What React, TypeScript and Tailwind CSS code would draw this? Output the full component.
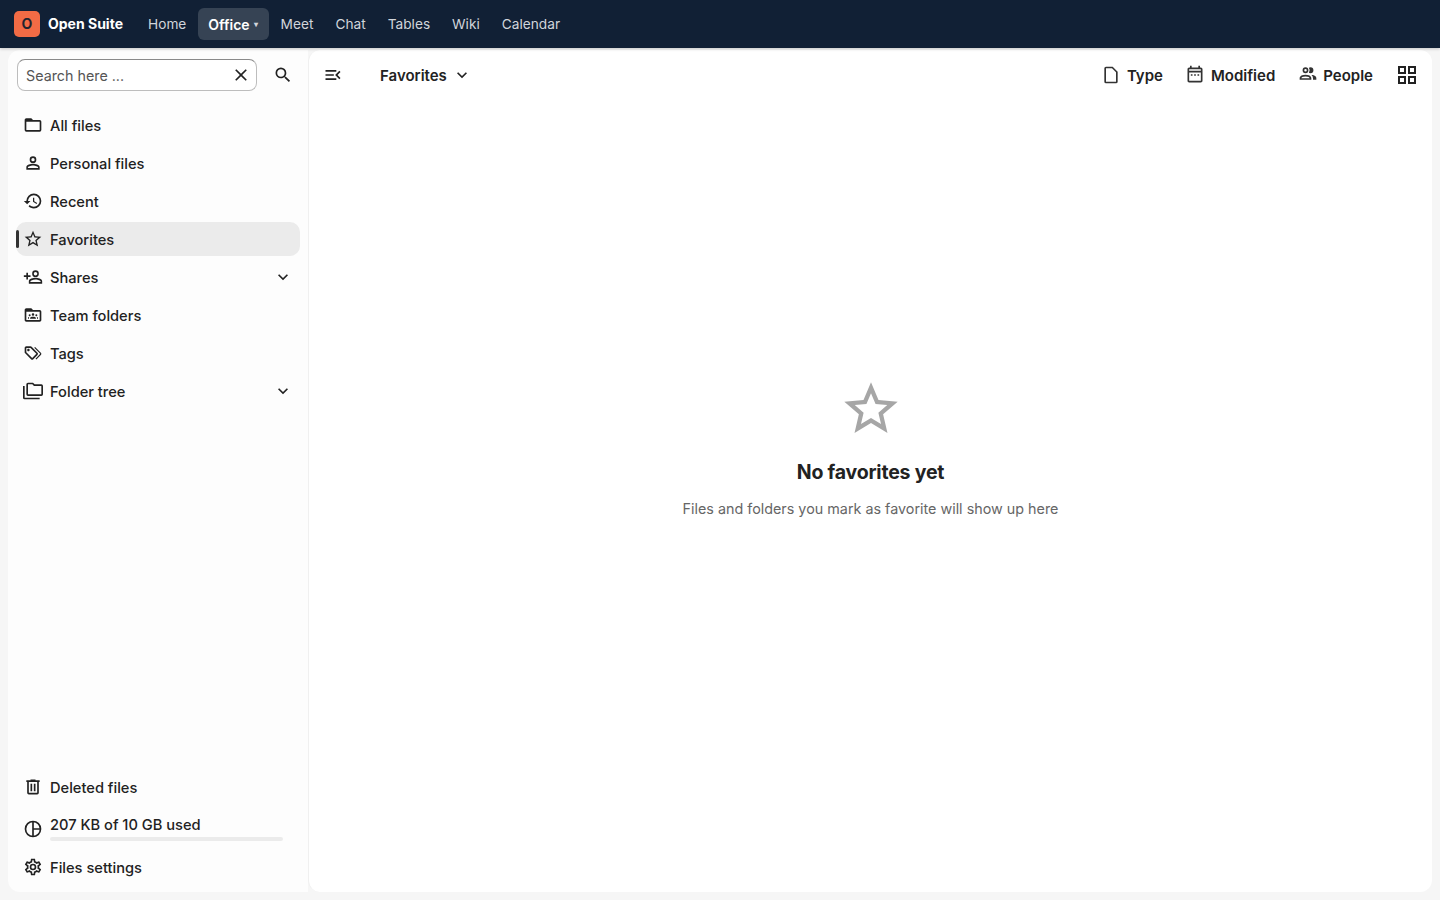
// Files app - Favorites empty view
import type { ReactNode } from 'react';

const paths = {
  folder: 'M20,18H4V8H20M20,6H12L10,4H4C2.89,4 2,4.89 2,6V18A2,2 0 0,0 4,20H20A2,2 0 0,0 22,18V8C22,6.89 21.1,6 20,6Z',
  account: 'M12,4A4,4 0 0,1 16,8A4,4 0 0,1 12,12A4,4 0 0,1 8,8A4,4 0 0,1 12,4M12,6A2,2 0 0,0 10,8A2,2 0 0,0 12,10A2,2 0 0,0 14,8A2,2 0 0,0 12,6M12,13C14.67,13 20,14.33 20,17V20H4V17C4,14.33 9.33,13 12,13M12,14.9C9.03,14.9 5.9,16.36 5.9,17V18.1H18.1V17C18.1,16.36 14.97,14.9 12,14.9Z',
  history: 'M13.5,8H12V13L16.28,15.54L17,14.33L13.5,12.25V8M13,3A9,9 0 0,0 4,12H1L4.96,16.03L9,12H6A7,7 0 0,1 13,5A7,7 0 0,1 20,12A7,7 0 0,1 13,19C11.07,19 9.32,18.21 8.06,16.94L6.64,18.36C8.27,20 10.5,21 13,21A9,9 0 0,0 22,12A9,9 0 0,0 13,3',
  star: 'M12,15.39L8.24,17.66L9.23,13.38L5.91,10.5L10.29,10.13L12,6.09L13.71,10.13L18.09,10.5L14.77,13.38L15.76,17.66M22,9.24L14.81,8.63L12,2L9.19,8.63L2,9.24L7.45,13.97L5.82,21L12,17.27L18.18,21L16.54,13.97L22,9.24Z',
  share: 'M15,4A4,4 0 0,0 11,8A4,4 0 0,0 15,12A4,4 0 0,0 19,8A4,4 0 0,0 15,4M15,5.9C16.16,5.9 17.1,6.84 17.1,8C17.1,9.16 16.16,10.1 15,10.1A2.1,2.1 0 0,1 12.9,8A2.1,2.1 0 0,1 15,5.9M4,7V10H1V12H4V15H6V12H9V10H6V7H4M15,13C12.33,13 7,14.33 7,17V20H23V17C23,14.33 17.67,13 15,13M15,14.9C17.97,14.9 21.1,16.36 21.1,17V18.1H8.9V17C8.9,16.36 12,14.9 15,14.9Z',
  team: 'M22 8V18C22 19.11 21.11 20 20 20H4C2.9 20 2 19.11 2 18V6C2 4.89 2.9 4 4 4H10L12 6H20C21.11 6 22 6.9 22 8M20 8H4V18H20V8ZM12 10A1.5 1.5 0 1 1 12 13A1.5 1.5 0 0 1 12 10M8 11.2A1.2 1.2 0 1 1 8 13.6A1.2 1.2 0 0 1 8 11.2M16 11.2A1.2 1.2 0 1 1 16 13.6A1.2 1.2 0 0 1 16 11.2M8.5 16.5V15.5C8.5 14.5 10.5 14 12 14S15.5 14.5 15.5 15.5V16.5H8.5M6 16.5V15.5C6 14.8 6.6 14.4 7.6 14.2C7.2 14.6 7.2 15.1 7.2 16.5H6M18 16.5H16.8C16.8 15.1 16.8 14.6 16.4 14.2C17.4 14.4 18 14.8 18 15.5V16.5Z',
  tags: 'M6.5 10C7.3 10 8 9.3 8 8.5S7.3 7 6.5 7 5 7.7 5 8.5 5.7 10 6.5 10M9 6L16 13L11 18L4 11V6H9M9 4H4C2.9 4 2 4.9 2 6V11C2 11.6 2.2 12.1 2.6 12.4L9.6 19.4C9.9 19.8 10.4 20 11 20S12.1 19.8 12.4 19.4L17.4 14.4C17.8 14 18 13.5 18 13C18 12.4 17.8 11.9 17.4 11.6L10.4 4.6C10.1 4.2 9.6 4 9 4M13.5 5.7L14.5 4.7L21.4 11.6C21.8 12 22 12.5 22 13S21.8 14.1 21.4 14.4L16 19.8L15 18.8L20.7 13L13.5 5.7Z',
  tree: 'M22,4H14L12,2H6A2,2 0 0,0 4,4V16A2,2 0 0,0 6,18H22A2,2 0 0,0 24,16V6A2,2 0 0,0 22,4M2,6H0V20A2,2 0 0,0 2,22H20V20H2V6M6,4H11.17L13.17,6H22V16H6V4Z',
  trash: 'M9,3V4H4V6H5V19A2,2 0 0,0 7,21H17A2,2 0 0,0 19,19V6H20V4H15V3H9M7,6H17V19H7V6M9,8V17H11V8H9M13,8V17H15V8H13Z',
  cog: 'M12,8A4,4 0 0,1 16,12A4,4 0 0,1 12,16A4,4 0 0,1 8,12A4,4 0 0,1 12,8M12,10A2,2 0 0,0 10,12A2,2 0 0,0 12,14A2,2 0 0,0 14,12A2,2 0 0,0 12,10M10,22C9.75,22 9.54,21.82 9.5,21.58L9.13,18.93C8.5,18.68 7.96,18.34 7.44,17.94L4.95,18.95C4.73,19.03 4.46,18.95 4.34,18.73L2.34,15.27C2.21,15.05 2.27,14.78 2.46,14.63L4.57,12.97L4.5,12L4.57,11L2.46,9.37C2.27,9.22 2.21,8.95 2.34,8.73L4.34,5.27C4.46,5.05 4.73,4.96 4.95,5.05L7.44,6.05C7.96,5.66 8.5,5.32 9.13,5.07L9.5,2.42C9.54,2.18 9.75,2 10,2H14C14.25,2 14.46,2.18 14.5,2.42L14.87,5.07C15.5,5.32 16.04,5.66 16.56,6.05L19.05,5.05C19.27,4.96 19.54,5.05 19.66,5.27L21.66,8.73C21.79,8.95 21.73,9.22 21.54,9.37L19.43,11L19.5,12L19.43,13L21.54,14.63C21.73,14.78 21.79,15.05 21.66,15.27L19.66,18.73C19.54,18.95 19.27,19.04 19.05,18.95L16.56,17.95C16.04,18.34 15.5,18.68 14.87,18.93L14.5,21.58C14.46,21.82 14.25,22 14,22H10M11.25,4L10.88,6.61C9.68,6.86 8.62,7.5 7.85,8.39L5.44,7.35L4.69,8.65L6.8,10.2C6.4,11.37 6.4,12.64 6.8,13.8L4.68,15.36L5.43,16.66L7.86,15.62C8.63,16.5 9.68,17.14 10.87,17.38L11.24,20H12.76L13.13,17.39C14.32,17.14 15.37,16.5 16.14,15.62L18.57,16.66L19.32,15.36L17.2,13.81C17.6,12.64 17.6,11.37 17.2,10.2L19.31,8.65L18.56,7.35L16.15,8.39C15.38,7.5 14.32,6.86 13.12,6.62L12.75,4H11.25Z',
  chevron: 'M7.41,8.58L12,13.17L16.59,8.58L18,10L12,16L6,10L7.41,8.58Z',
  magnify: 'M9.5,3A6.5,6.5 0 0,1 16,9.5C16,11.11 15.41,12.59 14.44,13.73L14.71,14H15.5L20.5,19L19,20.5L14,15.5V14.71L13.73,14.44C12.59,15.41 11.11,16 9.5,16A6.5,6.5 0 0,1 3,9.5A6.5,6.5 0 0,1 9.5,3M9.5,5C7,5 5,7 5,9.5C5,12 7,14 9.5,14C12,14 14,12 14,9.5C14,7 12,5 9.5,5Z',
  close: 'M19,6.41L17.59,5L12,10.59L6.41,5L5,6.41L10.59,12L5,17.59L6.41,19L12,13.41L17.59,19L19,17.59L13.41,12L19,6.41Z',
  file: 'M14,2H6A2,2 0 0,0 4,4V20A2,2 0 0,0 6,22H18A2,2 0 0,0 20,20V8L14,2M18,20H6V4H13.2L18,8.8V20Z',
  calendar: 'M7 11H9V13H7V11M21 5V19C21 20.11 20.11 21 19 21H5C3.89 21 3 20.1 3 19V5C3 3.9 3.9 3 5 3H6V1H8V3H16V1H18V3H19C20.11 3 21 3.9 21 5M5 7H19V5H5V7M19 19V9H5V19H19M17 13V11H15V13H17M13 13V11H11V13H13Z',
  people: 'M13.07 10.41A5 5 0 0 0 13.07 4.59A3.39 3.39 0 0 1 15 4A3.5 3.5 0 0 1 15 11A3.39 3.39 0 0 1 13.07 10.41M5.5 7.5A3.5 3.5 0 1 1 9 11A3.5 3.5 0 0 1 5.5 7.5M7.5 7.5A1.5 1.5 0 1 0 9 6A1.5 1.5 0 0 0 7.5 7.5M16 17V19H2V17S2 13 9 13 16 17 16 17M14 17C13.86 16.22 12.67 15 9 15S4.07 16.22 4 17M15.95 13A5.32 5.32 0 0 1 18 17V19H22V17S22 13.37 15.94 13Z',
  grid: 'M3 11H11V3H3M5 5H9V9H5M13 21H21V13H13M15 15H19V19H15M3 21H11V13H3M5 15H9V19H5M13 3V11H21V3M19 9H15V5H19Z',
  menuOpen: 'M21,15.61L19.59,17L14.58,12L19.59,7L21,8.39L17.44,12L21,15.61M3,6H16V8H3V6M3,13V11H13V13H3M3,18V16H16V18H3Z',
};

function Icon({ d, size = 20, className }: { d: string; size?: number; className?: string }) {
  return (
    <svg viewBox="0 0 24 24" width={size} height={size} fill="currentColor" className={className}>
      <path d={d} />
    </svg>
  );
}

function PieIcon() {
  return (
    <svg viewBox="0 0 24 24" width={20} height={20} fill="none" stroke="currentColor" strokeWidth={2}>
      <circle cx="12" cy="12" r="9" />
      <path d="M12 3v18M12 12h9" />
    </svg>
  );
}

function NavRow({ icon, label, active, expandable, className = '' }: { icon: ReactNode; label: string; active?: boolean; expandable?: boolean; className?: string }) {
  return (
    <div className={`relative flex h-[34px] shrink-0 items-center rounded-[10px] pl-[7px] pr-[7px] ${active ? 'bg-[#ebebeb]' : ''} ${className}`}>
      {active && <span className="absolute left-0 top-2 h-[18px] w-[3px] rounded-sm bg-[#333333]" />}
      <span className="flex w-5 justify-center">{icon}</span>
      <span className="ml-[7px] flex-1 pt-0.5 text-[14.65px] font-medium leading-[18px] text-[#222222]">{label}</span>
      {expandable && <Icon d={paths.chevron} className="text-[#222222]" />}
    </div>
  );
}

function FilterButton({ d, label, gap, iconClass = '' }: { d: string; label: string; gap: string; iconClass?: string }) {
  return (
    <div className={`flex items-center ${gap}`}>
      <Icon d={d} className={`text-[#333333] ${iconClass}`} />
      <span className="pt-0.5 text-[15px] font-semibold text-[#222222]">{label}</span>
    </div>
  );
}

const topLinks = ['Home', 'Office', 'Meet', 'Chat', 'Tables', 'Wiki', 'Calendar'];

export default function App() {
  return (
    <div className="flex h-[900px] w-[1440px] flex-col overflow-hidden bg-[#f6f6f6] font-['Inter',sans-serif] text-[#222222]">
      {/* Top bar */}
      <header className="z-10 flex h-12 shrink-0 items-center bg-[#112035] pl-3.5 shadow-[0_1px_3px_rgba(0,0,0,0.2)]">
        <div className="flex h-[26px] w-[26px] items-center justify-center rounded-[5px] bg-[#f26b45] text-sm font-bold text-[#1f2430]">O</div>
        <span className="ml-2 text-sm font-bold text-white">Open Suite</span>
        <nav className="ml-[15px] flex items-center gap-0.5">
          {topLinks.map((link) =>
            link === 'Office' ? (
              <div key={link} className="flex h-8 items-center rounded-md bg-[#364354] pl-2.5 pr-[11px] text-[14px] font-semibold text-white">
                Office<span className="ml-1 text-[8px] text-[#d1d5db]">▾</span>
              </div>
            ) : (
              <div key={link} className="flex h-8 items-center px-2.5 text-[13.7px] text-[#d1d5db]">{link}</div>
            )
          )}
        </nav>
      </header>

      <div className="flex min-h-0 flex-1 pb-2 pl-2 pr-2 pt-0.5">
        {/* Sidebar */}
        <aside className="flex w-[300px] shrink-0 flex-col rounded-l-xl bg-[#fdfdfd] pb-2 pl-2 pr-2 pt-[9px]">
          <div className="flex items-center pl-px">
            <div className="flex h-8 w-60 items-center rounded-lg border border-[#bdbdbd] border-t-[#8a8a8a] bg-white pl-2 pr-[5px]">
              <span className="flex-1 pt-0.5 text-[14.3px] text-[#555555]">Search here ...</span>
              <Icon d={paths.close} className="text-[#222222]" />
            </div>
            <Icon d={paths.magnify} className="ml-4 text-[#222222]" />
          </div>

          <div className="mt-[17px] flex flex-col gap-1">
            <NavRow icon={<Icon d={paths.folder} />} label="All files" />
            <NavRow icon={<Icon d={paths.account} />} label="Personal files" />
            <NavRow icon={<Icon d={paths.history} />} label="Recent" />
            <NavRow icon={<Icon d={paths.star} />} label="Favorites" active />
            <NavRow icon={<Icon d={paths.share} />} label="Shares" expandable />
            <NavRow icon={<Icon d={paths.team} />} label="Team folders" />
            <NavRow icon={<Icon d={paths.tags} />} label="Tags" />
            <NavRow icon={<Icon d={paths.tree} />} label="Folder tree" expandable />
          </div>

          <div className="flex-1" />

          <NavRow icon={<Icon d={paths.trash} />} label="Deleted files" />
          <div className="mt-[3px] flex h-[42px] shrink-0 items-center pl-[7px] pr-[17px]">
            <span className="mt-0.5 flex w-5 justify-center"><PieIcon /></span>
            <div className="ml-[7px] flex-1">
              <div className="text-[14.65px] font-medium leading-[20px] text-[#222222]">207 KB of 10 GB used</div>
              <div className="mt-0.5 h-1 rounded-full bg-[#ebebeb]" />
            </div>
          </div>
          <NavRow icon={<Icon d={paths.cog} />} label="Files settings" className="mt-px" />
        </aside>

        {/* Main */}
        <main className="flex min-w-0 flex-1 flex-col rounded-xl border-l border-[#f0f0f0] bg-white">
          <div className="flex h-[50px] shrink-0 items-center pl-[14px] pr-[13px]">
            <Icon d={paths.menuOpen} />
            <div className="ml-[37px] flex items-center gap-[5px]">
              <span className="pt-0.5 text-[15px] font-semibold">Favorites</span>
              <Icon d={paths.chevron} />
            </div>
            <div className="ml-auto flex items-center">
              <FilterButton d={paths.file} label="Type" gap="gap-1.5" />
              <FilterButton d={paths.calendar} label="Modified" gap="gap-1.5 ml-[22px]" iconClass="-mt-px" />
              <FilterButton d={paths.people} label="People" gap="gap-[5px] ml-[23px]" iconClass="-mt-0.5" />
              <Icon d={paths.grid} size={24} className="ml-[22px]" />
            </div>
          </div>
          <div className="flex flex-col items-center pt-[277px]">
            <Icon d={paths.star} size={64} className="text-[#a6a6a6]" />
            <h2 className="mt-[17px] text-[19.5px] font-bold leading-7 tracking-[-0.2px] text-[#222222]">No favorites yet</h2>
            <p className="mt-[13px] text-[14.35px] leading-5 text-[#666666]">Files and folders you mark as favorite will show up here</p>
          </div>
        </main>
      </div>
    </div>
  );
}
